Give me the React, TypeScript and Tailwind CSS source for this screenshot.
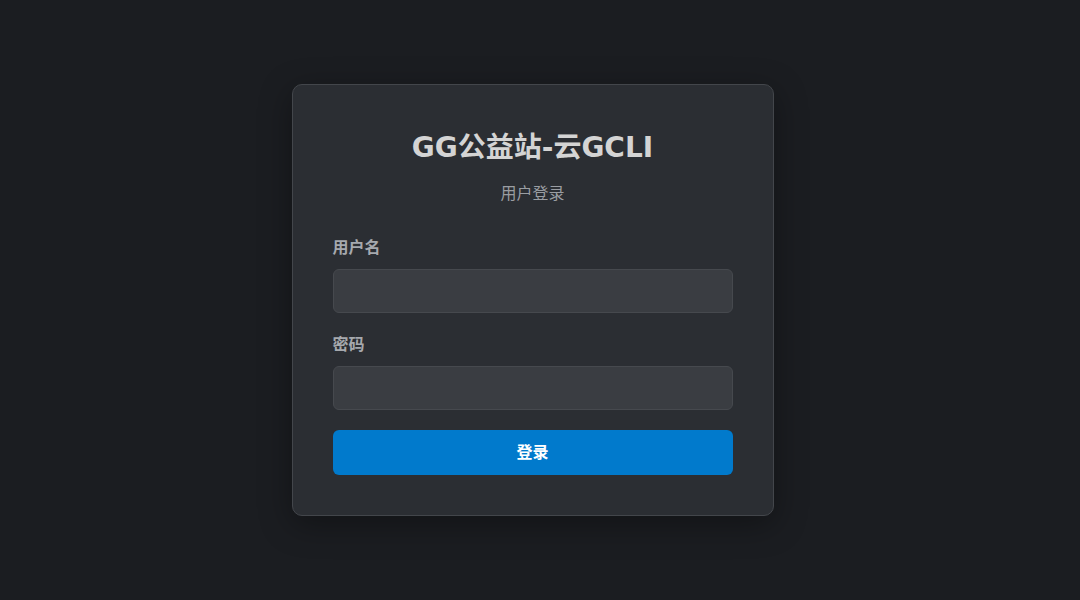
import React from "react";

const App = () => {
  return (
    <div
      className="min-h-[600px] w-full bg-[#1b1d21] flex justify-center pt-[84px] pr-[15px]"
      style={{ fontFamily: '"DejaVu Sans", "Noto Sans CJK SC", sans-serif' }}
    >
      <div className="w-[482px] h-[432px] bg-[#2b2e33] border border-[#43464b] rounded-[10px] p-10 shadow-[0_8px_32px_rgba(0,0,0,0.35)] flex flex-col">
        <h1 className="mt-[2px] text-[28px] leading-[42px] font-bold text-[#d4d4d4] text-center">GG公益站-云GCLI</h1>
        <p className="mt-[13px] text-base leading-6 text-[#9a9da2] text-center">用户登录</p>

        <form className="mt-[30px] flex flex-col">
          <label className="text-base leading-6 font-bold text-[#a6a9ae]">用户名</label>
          <input
            type="text"
            className="mt-[9px] h-[44px] w-full rounded-[6px] bg-[#3a3d42] border border-[#46494e] px-3 text-[#d4d4d4] outline-none"
          />

          <label className="mt-5 text-base leading-6 font-bold text-[#a6a9ae]">密码</label>
          <input
            type="password"
            className="mt-[9px] h-[44px] w-full rounded-[6px] bg-[#3a3d42] border border-[#46494e] px-3 text-[#d4d4d4] outline-none"
          />

          <button
            type="button"
            className="mt-5 h-[45px] w-full rounded-[6px] bg-[#017acc] text-white text-base font-bold"
          >
            登录
          </button>
        </form>
      </div>
    </div>
  );
};

export default App;
